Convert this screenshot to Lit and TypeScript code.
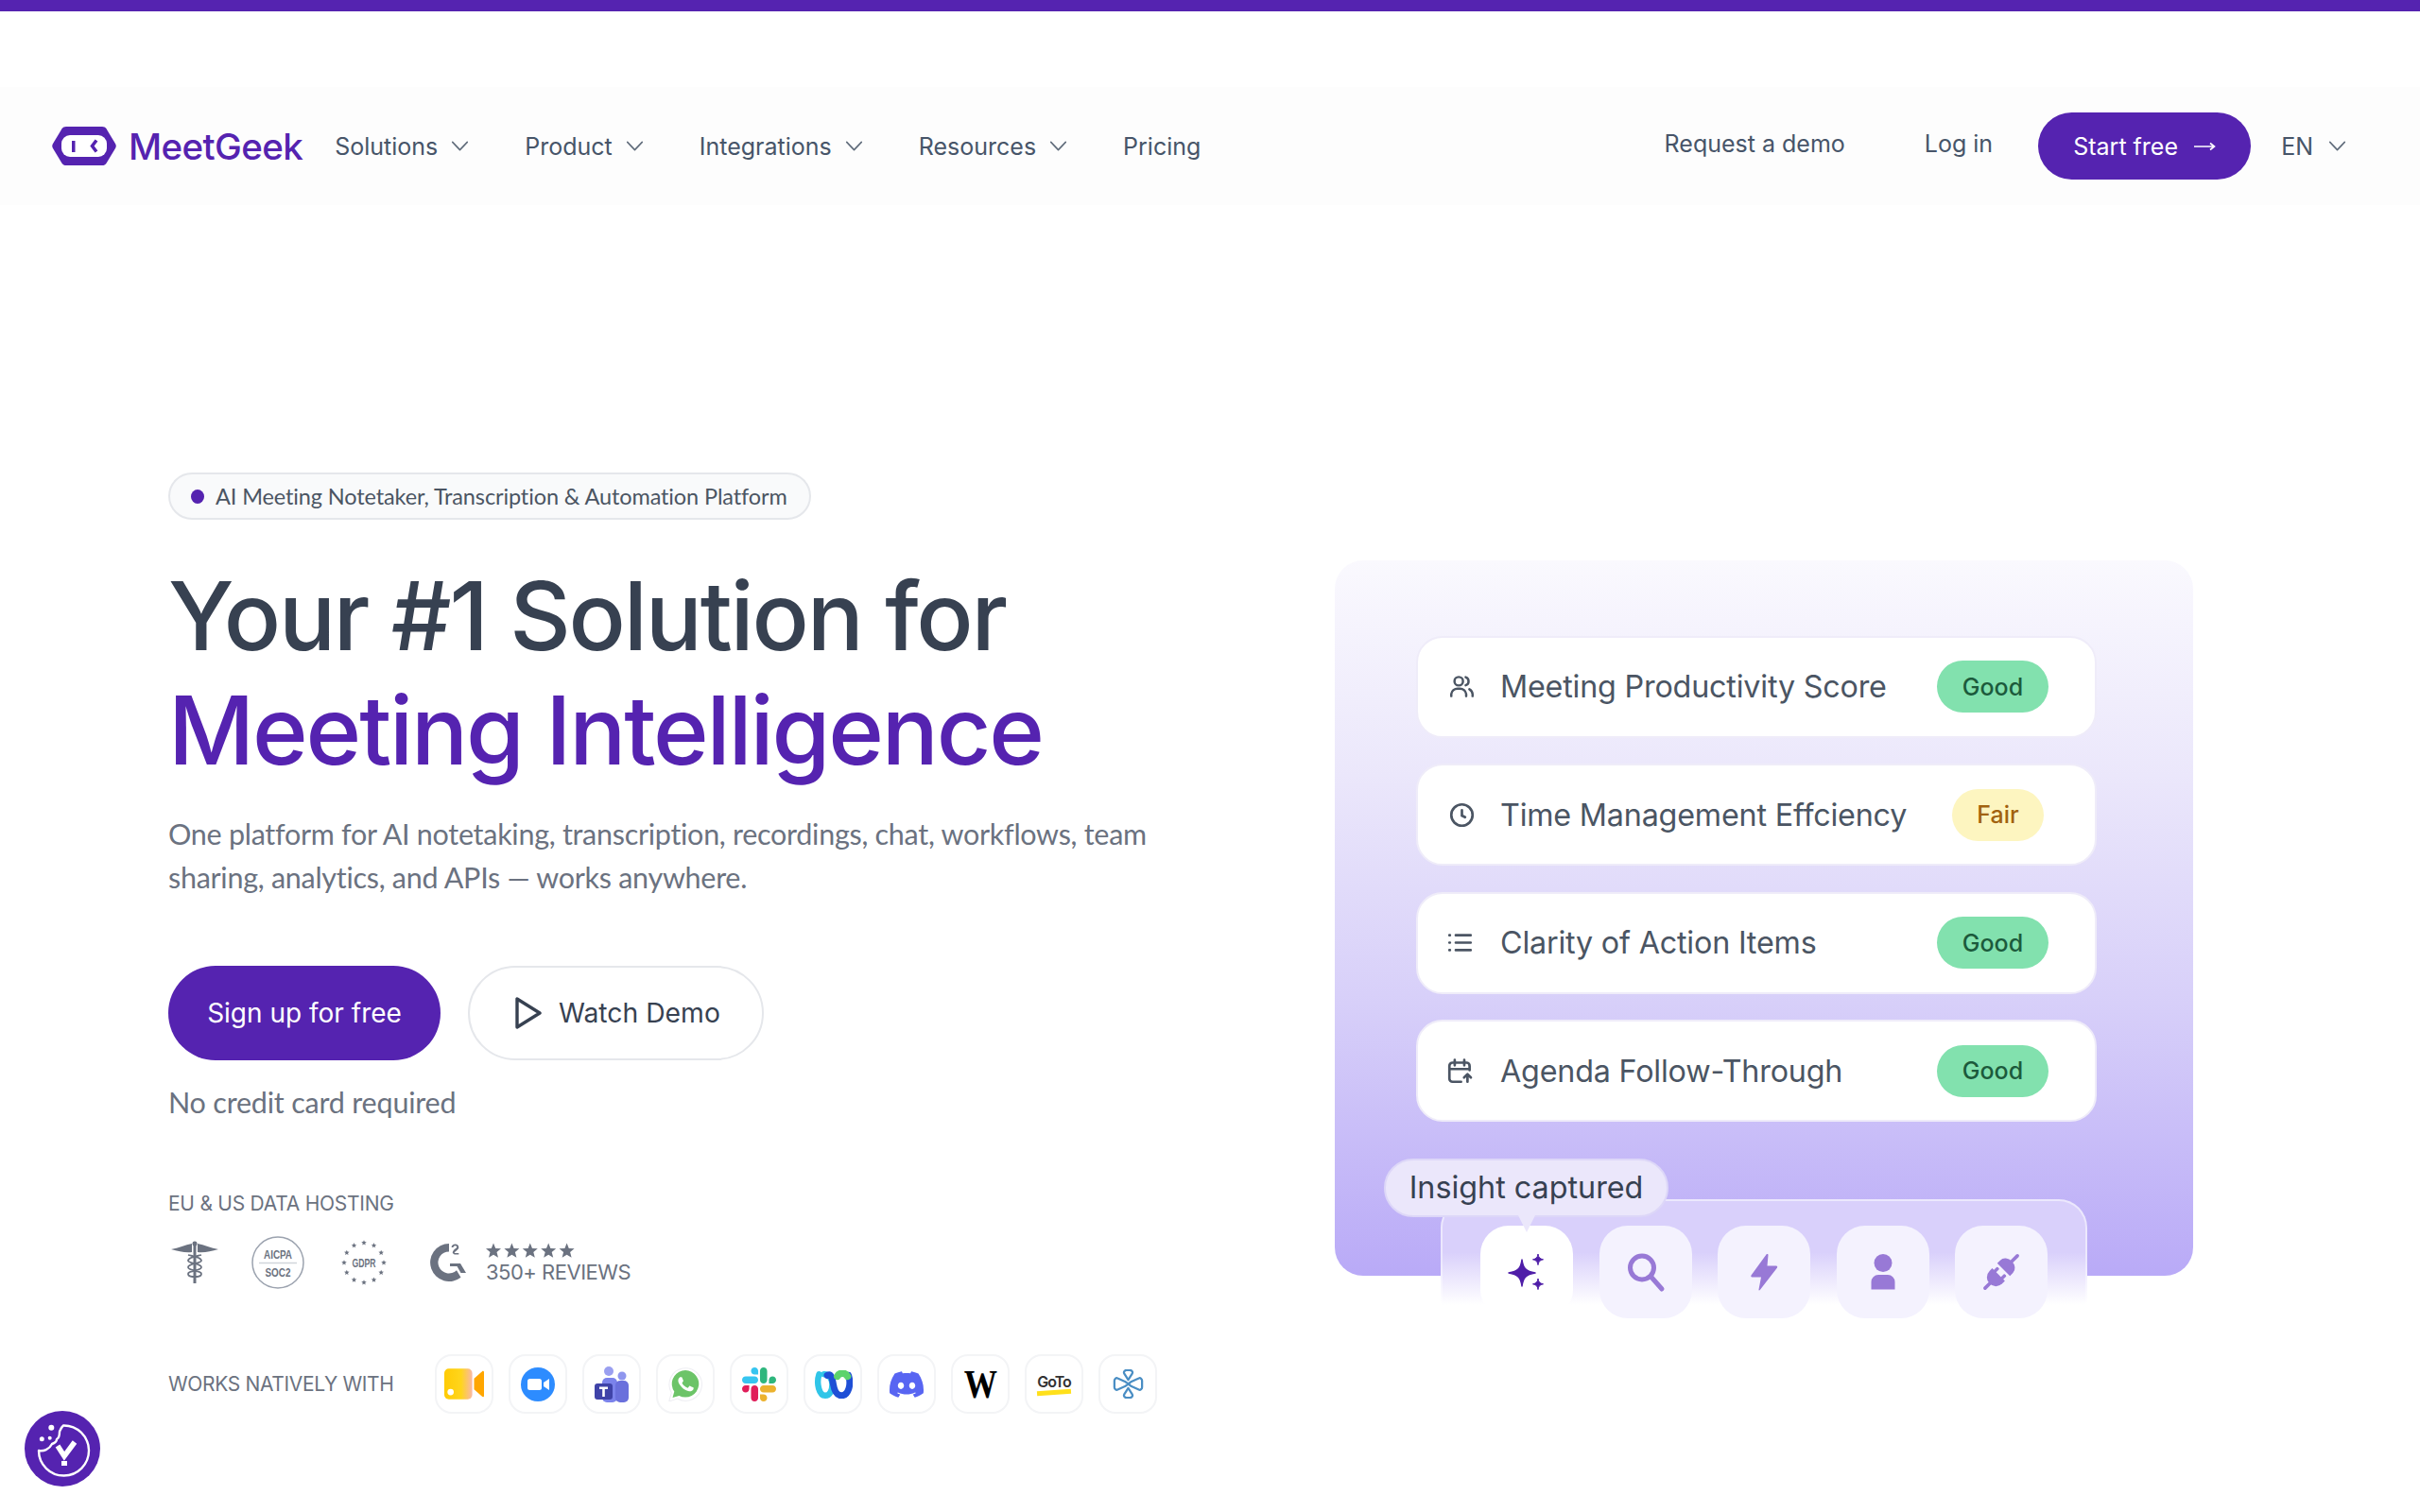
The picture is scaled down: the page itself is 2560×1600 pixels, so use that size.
import { LitElement, html, css, svg } from "lit";
import { customElement } from "lit/decorators.js";

const chev = html`<svg class="chev" viewBox="0 0 20 12" fill="none" stroke="currentColor" stroke-width="1.7" stroke-linecap="round" stroke-linejoin="round"><path d="M1.5 1.5 10 10.5 18.5 1.5"/></svg>`;

const star = svg`<path d="M8 0l2.200 5.400 5.800.4-4.500 3.700 1.500 5.700L8 12.200 3 15.200l1.500-5.700L0 5.800l5.800-.4z"/>`;

const rowIcons: Record<string, unknown> = {
  users: html`<svg class="ri" viewBox="0 0 24 24" fill="none" stroke="#4b5563" stroke-width="2.200" stroke-linecap="round"><circle cx="9" cy="7" r="4"/><path d="M2 21v-2a6 6 0 0 1 6-5h2a6 6 0 0 1 6 5v2"/><path d="M15.500 3.200a4 4 0 0 1 0 7.600M19 14.500a6 6 0 0 1 3 4.500v2"/></svg>`,
  clock: html`<svg class="ri" viewBox="0 0 24 24" fill="none" stroke="#4b5563" stroke-width="2.400" stroke-linecap="round"><circle cx="12" cy="12" r="10"/><path d="M12 7.500v5l3 1.500"/></svg>`,
  list: html`<svg class="ri left" viewBox="0 0 24 24" fill="none" stroke="#4b5563" stroke-width="2.400" stroke-linecap="round"><path d="M8 5h14M8 12h14M8 19h14M2 5h.5M2 12h.5M2 19h.5"/></svg>`,
  cal: html`<svg class="ri left" viewBox="0 0 24 24" fill="none" stroke="#4b5563" stroke-width="2.400" stroke-linecap="round" stroke-linejoin="round"><path d="M21 11V7a3 3 0 0 0-3-3H5a3 3 0 0 0-3 3v12a3 3 0 0 0 3 3h8M2 10h19M7 1.500v5M16 1.500v5M19 22v-7M15.800 18l3.200-3.200 3.200 3.200"/></svg>`,
};

const rows = [
  { icon: "users", label: "Meeting Productivity Score", pill: "Good" },
  { icon: "clock", label: "Time Management Effciency", pill: "Fair" },
  { icon: "list", label: "Clarity of Action Items", pill: "Good" },
  { icon: "cal", label: "Agenda Follow-Through", pill: "Good" },
];

const toolIcons = [
  html`<svg viewBox="0 0 40 40" fill="#4f1ea8"><path d="M15 7c1.200 9 4 12.300 14 14-10 1.700-12.800 5-14 14-1.200-9-4-12.300-14-14 10-1.700 12.800-5 14-14z" stroke="#4f1ea8" stroke-width="1.500" stroke-linejoin="round"/><path d="M32 1c.6 3.800 1.800 5 5.500 5.800C33.800 7.600 32.600 8.800 32 12.600c-.6-3.800-1.800-5-5.500-5.800C30.200 6 31.400 4.800 32 1zM32 27c.6 3.800 1.800 5 5.500 5.800-3.700.8-4.900 2-5.500 5.800-.6-3.800-1.800-5-5.500-5.800 3.700-.8 4.900-2 5.500-5.800z" stroke="#4f1ea8" stroke-width="1" stroke-linejoin="round"/></svg>`,
  html`<svg viewBox="0 0 40 40" fill="none" stroke="#9879d6" stroke-width="5" stroke-linecap="round"><circle cx="16" cy="15.500" r="12.500"/><path d="M25.500 25 37 38"/></svg>`,
  html`<svg viewBox="0 0 40 40" fill="#9879d6"><path d="M22.500 1.500 6.500 23.500c-.6 1 0 2 1 2h9.500l-2.500 13c-.2 1 .8 1.300 1.300.5L34 15.500c.6-1 0-2-1-2h-9.500l1-11.500c.1-1-1.300-1.300-2-.5z"/></svg>`,
  html`<svg viewBox="0 0 40 40" fill="#9879d6"><circle cx="20" cy="10.500" r="9.500"/><path d="M7.500 38.500V30.500a7.500 7.500 0 0 1 7.500-7.500h10a7.500 7.500 0 0 1 7.500 7.500v8z"/></svg>`,
  html`<svg viewBox="0 0 40 40" fill="#9879d6"><g transform="rotate(45 20 20)"><rect x="18.200" y="-6" width="3.600" height="12" rx="1.800"/><path d="M10.500 16.500V12a9.500 8 0 0 1 19 0v4.500z"/><rect x="13" y="19" width="3.400" height="7" rx="1"/><rect x="23.600" y="19" width="3.400" height="7" rx="1"/><path d="M10.500 24H29.500V28a9.500 9.500 0 0 1-19 0z"/><rect x="18.200" y="34" width="3.600" height="12" rx="1.800"/></g></svg>`,
];

const apps = [
  html`<svg class="a-cam" viewBox="0 0 44 34"><defs><linearGradient id="cam" x1="0" x2="1"><stop offset="0" stop-color="#ffcb05"/><stop offset=".6" stop-color="#ffd51c"/><stop offset="1" stop-color="#f9b8a6"/></linearGradient></defs><rect x="0" y="0" width="31" height="34" rx="5" fill="url(#cam)"/><circle cx="7" cy="26" r="3.500" fill="#fff"/><path d="M33 11 42 3c1-.8 2 0 2 1v26c0 1-1 1.800-2 1l-9-8z" fill="#ffa600"/></svg>`,
  html`<svg viewBox="0 0 36 36"><circle cx="18" cy="18" r="18" fill="#2d8cff"/><rect x="7" y="12" width="15" height="12" rx="2.500" fill="#fff"/><path d="m24 16 6-4v12l-6-4z" fill="#fff"/></svg>`,
  html`<svg class="a-teams" viewBox="0 0 36 38"><circle cx="15" cy="5" r="5" fill="#9a9ff0"/><circle cx="29" cy="10" r="4.500" fill="#8f96ee"/><rect x="8" y="12" width="16" height="26" rx="5" fill="#7b83eb"/><rect x="22" y="15" width="14" height="23" rx="5" fill="#6a70dc"/><rect x="0" y="18" width="19" height="17" rx="3" fill="#3f43a8"/><path d="M5 21.500h9v2.500h-3.200v8H8.200v-8H5z" fill="#fff"/></svg>`,
  html`<svg viewBox="0 0 24 24"><path d="M.5 24l1.700-6.200A11.500 11.500 0 1 1 6.400 22z" fill="#fff" stroke="#eeeef3" stroke-width=".7"/><path d="M3 21.300l1.200-4.300A9.500 9.500 0 1 1 7.600 20z" fill="#6cc468"/><path d="M17.500 14.400c-.3-.15-1.760-.87-2.030-.97-.27-.1-.47-.15-.67.15-.2.3-.77.97-.94 1.160-.17.2-.35.220-.64.070-.3-.15-1.260-.460-2.390-1.470-.88-.790-1.480-1.760-1.650-2.060-.17-.3-.02-.46.13-.61.13-.130.300-.350.450-.520.15-.170.200-.300.300-.500.100-.200.050-.370-.025-.520-.075-.150-.670-1.610-.920-2.210-.240-.580-.490-.500-.670-.510-.170-.010-.370-.010-.570-.010s-.520.070-.790.370c-.270.300-1.040 1.020-1.040 2.480s1.070 2.880 1.210 3.070c.150.200 2.100 3.200 5.080 4.490.710.310 1.260.490 1.690.630.710.230 1.360.190 1.870.120.570-.090 1.760-.720 2.010-1.410.250-.690.250-1.290.170-1.410-.070-.120-.270-.200-.570-.350z" fill="#fff" transform="translate(1.500 1) scale(.9)"/></svg>`,
  html`<svg viewBox="0 0 122.800 122.800"><path d="M25.800 77.600c0 7.100-5.800 12.900-12.900 12.900S0 84.700 0 77.600s5.800-12.900 12.900-12.900h12.900v12.900zM32.300 77.600c0-7.100 5.800-12.900 12.900-12.900s12.900 5.800 12.900 12.900v32.300c0 7.100-5.800 12.900-12.900 12.900s-12.900-5.800-12.900-12.900V77.600z" fill="#e01e5a"/><path d="M45.200 25.800c-7.100 0-12.900-5.800-12.900-12.900S38.100 0 45.200 0s12.900 5.800 12.900 12.900v12.900H45.200zM45.200 32.300c7.100 0 12.900 5.800 12.900 12.900s-5.800 12.900-12.900 12.900H12.900C5.800 58.100 0 52.300 0 45.200s5.800-12.900 12.900-12.900h32.300z" fill="#36c5f0"/><path d="M97 45.200c0-7.100 5.800-12.900 12.900-12.900s12.900 5.800 12.900 12.900-5.800 12.900-12.900 12.900H97V45.200zM90.500 45.200c0 7.100-5.800 12.900-12.900 12.900s-12.900-5.800-12.900-12.900V12.900C64.700 5.800 70.500 0 77.600 0s12.900 5.800 12.900 12.900v32.300z" fill="#2eb67d"/><path d="M77.600 97c7.100 0 12.900 5.800 12.900 12.900s-5.800 12.900-12.900 12.900-12.900-5.800-12.900-12.900V97h12.900zM77.600 90.500c-7.100 0-12.900-5.800-12.900-12.900s5.800-12.900 12.900-12.900h32.300c7.100 0 12.900 5.800 12.900 12.900s-5.800 12.900-12.900 12.900H77.600z" fill="#ecb22e"/></svg>`,
  html`<svg class="a-webex" viewBox="0 0 38 28" fill="none" stroke-linecap="round"><path d="M5 4c-3 9 0 21 6 21 5 0 7-6 7-11S15 4 10 4" stroke="#30c5e8" stroke-width="6"/><path d="M13 5c4-2 5 3 6 9 1 6 3 11 8 11 7 0 10-11 7-20" stroke="#1f4fd6" stroke-width="6.500"/><path d="M33 6c-2-4-8-4-10 0" stroke="#5dd36c" stroke-width="7"/></svg>`,
  html`<svg viewBox="0 0 24 24"><path fill="#5865f2" d="M20.317 4.3698a19.7913 19.7913 0 00-4.8851-1.5152.0741.0741 0 00-.0785.0371c-.211.3753-.4447.8648-.6083 1.2495-1.8447-.2762-3.68-.2762-5.4868 0-.1636-.3933-.4058-.8742-.6177-1.2495a.077.077 0 00-.0785-.037 19.7363 19.7363 0 00-4.8852 1.515.0699.0699 0 00-.0321.0277C.5334 9.0458-.319 13.5799.0992 18.0578a.0824.0824 0 00.0312.0561c2.0528 1.5076 4.0413 2.4228 5.9929 3.0294a.0777.0777 0 00.0842-.0276c.4616-.6304.8731-1.2952 1.226-1.9942a.076.076 0 00-.0416-.1057c-.6528-.2476-1.2743-.5495-1.8722-.8923a.077.077 0 01-.0076-.1277c.1258-.0943.2517-.1923.3718-.2914a.0743.0743 0 01.0776-.0105c3.9278 1.7933 8.18 1.7933 12.0614 0a.0739.0739 0 01.0785.0095c.1202.099.246.1981.3728.2924a.077.077 0 01-.0066.1276 12.2986 12.2986 0 01-1.873.8914.0766.0766 0 00-.0407.1067c.3604.698.7719 1.3628 1.225 1.9932a.076.076 0 00.0842.0286c1.961-.6067 3.9495-1.5219 6.0023-3.0294a.077.077 0 00.0313-.0552c.5004-5.177-.8382-9.6739-3.5485-13.6604a.061.061 0 00-.0312-.0286zM8.02 15.3312c-1.1825 0-2.1569-1.0857-2.1569-2.419 0-1.3332.9555-2.4189 2.157-2.4189 1.2108 0 2.1757 1.0952 2.1568 2.419 0 1.3332-.9555 2.4189-2.1569 2.4189zm7.9748 0c-1.1825 0-2.1569-1.0857-2.1569-2.419 0-1.3332.9554-2.4189 2.1569-2.4189 1.2108 0 2.1757 1.0952 2.1568 2.419 0 1.3332-.946 2.4189-2.1568 2.4189Z"/></svg>`,
  html`<span class="wiki">W</span>`,
  html`<span class="goto"><span class="gotxt">GoTo</span><span class="gobar"></span></span>`,
  html`<svg class="a-star" viewBox="0 0 36 36" fill="none" stroke="#4a8ec4" stroke-width="2.600" stroke-linejoin="round"><path d="M18 13 13 5c-1-2 1-4 3-4h4c2 0 4 2 3 4zM18 23l-5 8c-1 2 1 4 3 4h4c2 0 4-2 3-4z"/><path d="M14 15 5 11c-2-1-4 1-4 3v8c0 2 2 4 4 3l9-4 4-3zM22 15l9-4c2-1 4 1 4 3v8c0 2-2 4-4 3l-9-4-4-3z"/></svg>`,
];

@customElement("app-root")
export class AppRoot extends LitElement {
  static styles = css`
    :host {
      display: block;
      width: 2560px;
      height: 1600px;
      overflow: hidden;
      background: #fff;
      position: relative;
      font-family: Inter, "Liberation Sans", sans-serif;
      color: #374151;
    }
    .topbar { height: 12px; background: #5523b0; }
    .nav {
      margin-top: 80px;
      height: 125px;
      background: #fdfdfd;
      display: flex;
      align-items: center;
      padding: 0 78px 0 55px;
      font-size: 25px;
      color: #475569;
      white-space: nowrap;
    }
    .logo { display: flex; align-items: center; gap: 13px; margin-right: 34px; }
    .logo svg { width: 68px; height: 41px; }
    .brand { font-size: 38.500px; font-weight: 500; color: #5523b0; letter-spacing: -0.6px; }
    .links { display: flex; gap: 59px; }
    .link { display: flex; align-items: center; gap: 14px; }
    .chev { width: 19px; height: 11px; color: #5f6b7a; }
    .right { margin-left: auto; display: flex; align-items: center; }
    .req { margin-right: 84px; position: relative; top: -3px; }
    .login { margin-right: 48px; position: relative; top: -3px; }
    .start {
      width: 225px; height: 71px; border-radius: 36px; background: #5523b0; color: #fff;
      display: flex; align-items: center; justify-content: center; gap: 16px; margin-right: 32px;
      line-height: 68px;
    }
    .start svg { width: 24px; height: 12px; }
    .lang { display: flex; align-items: center; gap: 16px; }

    .hero {
      display: grid;
      grid-template-columns: 1234px 908px;
      padding: 283px 0 0 178px;
      align-items: start;
    }
    .badge {
      display: inline-flex; align-items: center; height: 50px; box-sizing: border-box; width: 680px;
      border: 2px solid #e5e7eb; border-radius: 25px; background: #f9fafb;
      padding-left: 22px; gap: 12px;
      font-family: Lato, sans-serif; font-size: 23.500px; letter-spacing: -0.12px; color: #4b5563; white-space: nowrap;
    }
    .dot { width: 14px; height: 15px; border-radius: 50%; background: #5523b0; }
    h1 {
      margin: 42px 0 0;
      font-size: 100px;
      line-height: 120.500px;
      font-weight: 500;
      letter-spacing: -2.200px;
      color: #374151;
      white-space: nowrap;
    }
    h1 span { color: #5523b0; display: block; }
    .lead {
      margin: 26px 0 0;
      font-family: Lato, sans-serif;
      font-size: 30.500px;
      letter-spacing: -0.28px;
      line-height: 46px;
      color: #6b7280;
      white-space: nowrap;
    }
    .cta { display: flex; gap: 29px; margin-top: 71px; }
    .btn {
      height: 100px; box-sizing: border-box; border-radius: 50px; display: flex;
      align-items: center; justify-content: center; font-size: 28px; white-space: nowrap;
    }
    .primary { width: 288px; background: #5523b0; color: #fff; }
    .ghost { width: 313px; border: 2px solid #e5e7eb; gap: 17px; color: #374151; justify-content: flex-start; padding-left: 47px; font-size: 28.300px; }
    .ghost svg { width: 30px; height: 34px; }
    .note { font-family: Lato, sans-serif; font-size: 30.500px; letter-spacing: -0.2px; color: #6b7280; margin-top: 25px; line-height: 38px; }
    .eu { font-size: 21px; color: #6b7280; margin-top: 76px; line-height: 26px; letter-spacing: -0.25px; }
    .certs { display: flex; align-items: center; margin-top: 21px; height: 56px; }
    .cad { width: 50px; height: 46px; margin-left: 3px; margin-right: 35px; }
    .aicpa { width: 56px; height: 56px; margin-right: 39px; }
    .gdpr { width: 48px; height: 48px; margin-right: 46px; }
    .g2 { width: 38px; height: 40px; margin-right: 21px; }
    .rev { display: flex; flex-direction: column; color: #6b7280; font-size: 22px; line-height: 24px; letter-spacing: -0.5px; white-space: nowrap; }
    .stars { width: 94px; height: 17px; fill: #6b7280; display: block; margin-bottom: 2px; }
    .works { display: flex; align-items: center; margin-top: 69px; }
    .works-l { width: 282px; font-size: 21px; color: #6b7280; letter-spacing: -0.35px; white-space: nowrap; }
    .tiles { display: flex; gap: 16px; }
    .tile {
      width: 62px; height: 63px; box-sizing: border-box; border: 2px solid #f3f4f6; border-radius: 18px;
      display: flex; align-items: center; justify-content: center;
    }
    .tile svg { width: 36px; height: 36px; display: block; flex: none; }
    .tile svg.a-cam { width: 42px; height: 33px; }
    .tile svg.a-teams { width: 36px; height: 38px; }
    .tile svg.a-webex { width: 41px; height: 30px; }
    .tile svg.a-star { width: 35px; height: 31px; }
    .wiki { font-family: "Liberation Serif", serif; font-size: 43px; font-weight: 700; color: #000; line-height: 1; transform: scaleX(.82); }
    .goto { display: flex; flex-direction: column; align-items: center; gap: 1px; }
    .gotxt { font-size: 16px; font-weight: 600; color: #333; letter-spacing: -1px; line-height: 16px; }
    .gobar { width: 36px; height: 5px; background: #ffe01b; transform: rotate(-4deg); }

    .card {
      margin-top: 93px;
      box-sizing: border-box;
      width: 908px; height: 757px;
      border-radius: 30px;
      background: linear-gradient(180deg, #faf9fe 0%, #ebe7fb 30%, #d7cff9 62%, #b9aaf7 100%);
      padding: 79.500px 0 0 86px;
      position: relative;
    }
    .rows { width: 720px; display: flex; flex-direction: column; gap: 27.600px; }
    .row {
      height: 108px; box-sizing: border-box; background: #fff; border: 2px solid #efecf9; border-radius: 28px;
      display: flex; align-items: center; padding-left: 33px;
    }
    .ri { width: 27px; height: 27px; flex: none; margin-right: 27px; }
    .ri.left { transform: translateX(-2px); }
    .label { font-size: 32.300px; color: #4b5563; white-space: nowrap; letter-spacing: -0.2px; }
    .pill {
      margin-left: auto; height: 55px; border-radius: 28px; display: flex; align-items: center; justify-content: center;
      font-size: 25px; font-weight: 500;
    }
    .good { width: 118px; background: #82e1ae; color: #1c5a3c; margin-right: 49px; }
    .fair { width: 97px; background: #fdf5c0; color: #a1620f; margin-right: 54px; }
    .panel {
      position: absolute; left: 112px; top: 676px; width: 684px; height: 131px; box-sizing: border-box;
      border-radius: 30px 30px 0 0;
      border: 2px solid transparent; border-bottom: 0;
      background:
        linear-gradient(180deg, #d9d0fb 0%, #d9d0fb 42%, #fff 85%) padding-box,
        linear-gradient(180deg, #ece8fd 0%, #ece8fd 50%, #fff 85%) border-box;
      display: flex; gap: 27.600px; padding: 26px 0 0 40px;
    }
    .tool {
      width: 98px; height: 98px; border-radius: 30px; background: #f4f2fe; flex: none;
      display: flex; align-items: center; justify-content: center;
    }
    .tool.on { background: #fff; }
    .tool svg { width: 40px; height: 40px; overflow: visible; }
    .tip {
      position: absolute; left: 52px; top: 633px; width: 301px; height: 62px; box-sizing: border-box;
      border-radius: 31px; background: #ebe7fb; border: 2px solid #ddd7f8;
      display: flex; align-items: center; justify-content: center;
      font-size: 32.300px; line-height: 54px; color: #374151; white-space: nowrap;
    }
    .tip::after {
      content: ""; position: absolute; left: 140px; top: 58px; width: 18px; height: 18px;
      background: #ebe7fb; clip-path: polygon(0 0, 100% 0, 50% 100%);
    }
    .cookie { position: absolute; left: 26px; top: 1493px; width: 80px; height: 80px; }
  `;

  render() {
    return html`
      <div class="topbar"></div>
      <header class="nav">
        <div class="logo">
          <svg viewBox="0 0 68 41"><path fill="#5523b0" d="M15 0h38c2 0 3.500.8 4.500 2.300L67 18c1 1.700 1 3.300 0 5L57.500 38.700c-1 1.500-2.500 2.300-4.500 2.300H15c-2 0-3.500-.8-4.500-2.300L1 23c-1-1.700-1-3.300 0-5L10.500 2.300C11.500.8 13 0 15 0z"/><rect x="10" y="9" width="48" height="23" rx="9" fill="#fff"/><rect x="21" y="15" width="3.500" height="12" fill="#5523b0"/><path d="M47 14.500 42.500 20.500 47 26.500" fill="none" stroke="#5523b0" stroke-width="3.500"/></svg>
          <span class="brand">MeetGeek</span>
        </div>
        <nav class="links">
          <div class="link">Solutions ${chev}</div>
          <div class="link">Product ${chev}</div>
          <div class="link">Integrations ${chev}</div>
          <div class="link">Resources ${chev}</div>
          <div class="link">Pricing</div>
        </nav>
        <div class="right">
          <span class="req">Request a demo</span>
          <span class="login">Log in</span>
          <div class="start">Start free <svg viewBox="0 0 24 12" fill="none" stroke="#fff" stroke-width="1.600"><path d="M1 6h21M18 2.500l4.500 3.500-4.500 3.500"/></svg></div>
          <div class="lang">EN ${chev}</div>
        </div>
      </header>

      <main class="hero">
        <section>
          <div class="badge"><span class="dot"></span>AI Meeting Notetaker, Transcription &amp; Automation Platform</div>
          <h1>Your #1 Solution for<span>Meeting Intelligence</span></h1>
          <p class="lead">One platform for AI notetaking, transcription, recordings, chat, workflows, team<br />sharing, analytics, and APIs — works anywhere.</p>
          <div class="cta">
            <div class="btn primary">Sign up for free</div>
            <div class="btn ghost">
              <svg viewBox="0 0 30 34" fill="none" stroke="#374151" stroke-width="3.400" stroke-linejoin="round"><path d="M3 2v30l24-15z"/></svg>
              Watch Demo
            </div>
          </div>
          <div class="note">No credit card required</div>
          <div class="eu">EU &amp; US DATA HOSTING</div>
          <div class="certs">
            <svg class="cad" viewBox="0 0 50 46" fill="#6b7280"><path d="M0 9c8-1 15-5 22-6v9c-7 1-14-1-22-3zM50 9c-8-1-15-5-22-6v9c7 1 14-1 22-3z"/><rect x="23.500" y="1" width="3" height="44"/><circle cx="25" cy="3" r="2.500"/><path d="M18 15c8 2 14 3 14 6s-14 3-14 7 14 3 14 7-9 3-9 3M32 15c-8 2-14 3-14 6s14 3 14 7-14 3-14 7 9 3 9 3" fill="none" stroke="#6b7280" stroke-width="1.800"/></svg>
            <svg class="aicpa" viewBox="0 0 56 56"><circle cx="28" cy="28" r="27" fill="none" stroke="#9ca3af" stroke-width="1.500"/><path d="M8 28.500h40" stroke="#d1d5db" stroke-width="1.500"/><text x="28" y="24" text-anchor="middle" font-family="Liberation Sans" font-size="12.500" font-weight="700" fill="#6b7280" textLength="30" lengthAdjust="spacingAndGlyphs">AICPA</text><text x="28" y="43" text-anchor="middle" font-family="Liberation Sans" font-size="12.500" font-weight="700" fill="#6b7280" textLength="27" lengthAdjust="spacingAndGlyphs">SOC2</text></svg>
            <svg class="gdpr" viewBox="0 0 48 48" fill="#6b7280"><text x="24" y="28.500" text-anchor="middle" font-family="Liberation Sans" font-size="12" font-weight="700" textLength="25" lengthAdjust="spacingAndGlyphs">GDPR</text>${[0,1,2,3,4,5,6,7,8,9,10,11].map((i) => { const a = (i * Math.PI) / 6; return svg`<g transform="translate(${24 + 21 * Math.sin(a) - 2.8} ${24 - 21 * Math.cos(a) - 2.8}) scale(.35)">${star}</g>`; })}</svg>
            <svg class="g2" viewBox="0 0 38 40" fill="#6b7280"><path d="M20 0v8.500a11.500 11.500 0 1 0 8 19.700l4.500 7.500A20 20 0 1 1 20 0z"/><path d="M21 21h11l6 10-5.500 0-4-7h-7.500zM25.500 11.500c0-1-2.500-.8-1.500-3 1.300-2.800 3-3.300 4-4.300.7-.9 0-2-1.400-2s-2 .8-2 1.800h-2c0-2.200 1.800-3.500 4-3.500s3.700 1.300 3.700 3.400c0 2.800-4.200 3.900-4.600 6h4.600v1.600z"/></svg>
            <div class="rev"><svg class="stars" viewBox="0 0 94 16">${[0, 19.4, 38.8, 58.2, 77.6].map((x) => svg`<g transform="translate(${x})">${star}</g>`)}</svg>350+ REVIEWS</div>
          </div>
          <div class="works">
            <div class="works-l">WORKS NATIVELY WITH</div>
            <div class="tiles">${apps.map((a) => html`<div class="tile">${a}</div>`)}</div>
          </div>
        </section>
        <section class="card">
          <div class="rows">
            ${rows.map((r) => html`<div class="row">${rowIcons[r.icon]}<span class="label">${r.label}</span><span class="pill ${r.pill === "Good" ? "good" : "fair"}">${r.pill}</span></div>`)}
          </div>
          <div class="panel">
            ${toolIcons.map((t, i) => html`<div class="tool ${i === 0 ? "on" : ""}">${t}</div>`)}
          </div>
          <div class="tip">Insight captured</div>
        </section>
      </main>
      <svg class="cookie" viewBox="0 0 80 80"><circle cx="40" cy="40" r="40" fill="#5523b0"/><path d="M41 15.500A26.500 26.500 0 1 1 15 42c5 1 11-1 14-7 3-1 5-3 5-5 2-1 3-4 3-8 1-2 2-5 4-6.500z" fill="none" stroke="#fff" stroke-width="2.400" stroke-linejoin="round"/><path d="M35 37l7 11 11-15" fill="none" stroke="#fff" stroke-width="5.500"/><rect x="39" y="53" width="6" height="5" fill="#fff"/><circle cx="28.300" cy="17.700" r="3" fill="#fff"/><circle cx="18.300" cy="29.700" r="2.500" fill="#fff"/><circle cx="26.700" cy="28.700" r="2" fill="#fff"/></svg>
    `;
  }
}
